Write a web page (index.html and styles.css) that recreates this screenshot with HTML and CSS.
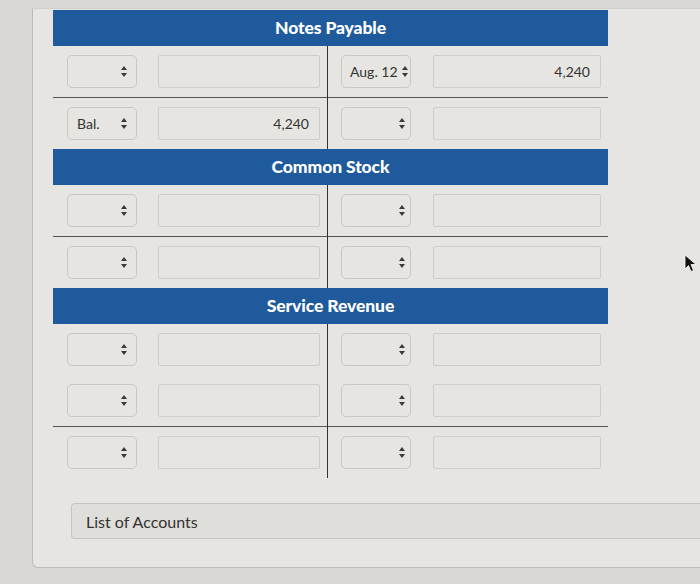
FILE: index.html
```html
<!DOCTYPE html>
<html lang="en">
<head>
    <meta charset="UTF-8">
    <meta name="viewport" content="width=device-width, initial-scale=1.0">
    <title>T-Accounts</title>
    <link rel="stylesheet" href="styles.css">
</head>
<body>
    <div class="panel">
        <div class="sheet">
            <!-- Notes Payable -->
            <div class="account">
                <div class="account-head">Notes Payable</div>
                <div class="t-body">
                    <div class="side debit">
                        <div class="row">
                            <div class="pick"><span></span><i class="arrows"></i></div>
                            <div class="amount"></div>
                        </div>
                        <div class="row ruled">
                            <div class="pick"><span>Bal.</span><i class="arrows"></i></div>
                            <div class="amount">4,240</div>
                        </div>
                    </div>
                    <div class="side credit">
                        <div class="row">
                            <div class="pick"><span>Aug. 12</span><i class="arrows"></i></div>
                            <div class="amount">4,240</div>
                        </div>
                        <div class="row ruled">
                            <div class="pick"><span></span><i class="arrows"></i></div>
                            <div class="amount"></div>
                        </div>
                    </div>
                </div>
            </div>

            <!-- Common Stock -->
            <div class="account">
                <div class="account-head">Common Stock</div>
                <div class="t-body">
                    <div class="side debit">
                        <div class="row">
                            <div class="pick"><span></span><i class="arrows"></i></div>
                            <div class="amount"></div>
                        </div>
                        <div class="row ruled">
                            <div class="pick"><span></span><i class="arrows"></i></div>
                            <div class="amount"></div>
                        </div>
                    </div>
                    <div class="side credit">
                        <div class="row">
                            <div class="pick"><span></span><i class="arrows"></i></div>
                            <div class="amount"></div>
                        </div>
                        <div class="row ruled">
                            <div class="pick"><span></span><i class="arrows"></i></div>
                            <div class="amount"></div>
                        </div>
                    </div>
                </div>
            </div>

            <!-- Service Revenue -->
            <div class="account">
                <div class="account-head">Service Revenue</div>
                <div class="t-body">
                    <div class="side debit">
                        <div class="row">
                            <div class="pick"><span></span><i class="arrows"></i></div>
                            <div class="amount"></div>
                        </div>
                        <div class="row">
                            <div class="pick"><span></span><i class="arrows"></i></div>
                            <div class="amount"></div>
                        </div>
                        <div class="row ruled">
                            <div class="pick"><span></span><i class="arrows"></i></div>
                            <div class="amount"></div>
                        </div>
                    </div>
                    <div class="side credit">
                        <div class="row">
                            <div class="pick"><span></span><i class="arrows"></i></div>
                            <div class="amount"></div>
                        </div>
                        <div class="row">
                            <div class="pick"><span></span><i class="arrows"></i></div>
                            <div class="amount"></div>
                        </div>
                        <div class="row ruled">
                            <div class="pick"><span></span><i class="arrows"></i></div>
                            <div class="amount"></div>
                        </div>
                    </div>
                </div>
            </div>
        </div>

        <div class="list-box">List of Accounts</div>
    </div>

    <svg class="cursor" width="14" height="20" viewBox="0 0 14 20">
        <path d="M1 1 L1 15 L4.5 11.5 L7 17.5 L9.5 16.5 L7 10.5 L12 10.5 Z" fill="#111" stroke="#fff" stroke-width="0.8"/>
    </svg>
</body>
</html>
```

FILE: styles.css
```css
body {
    margin: 0;
    height: 584px;
    overflow: hidden;
    background: #d9d7d4;
    font-family: Lato, "Open Sans", sans-serif;
    position: relative;
}
.panel {
    margin-left: 32px;
    height: 560px;
    padding: 9px 0 0 20px;
    background: #e7e5e2;
    border-left: 1px solid #bdbbb7;
    border-bottom: 1px solid #bdbbb7;
    border-top: 1px solid #d2d0cc;
    border-bottom-left-radius: 6px;
    box-sizing: border-box;
    margin-top: 8px;
}
.sheet {
    width: 555px;
    margin-top: -8px;
}
.account-head {
    height: 36px;
    line-height: 36px;
    background: #1e5a9c;
    color: #fff;
    font-weight: 900;
    font-size: 17.5px;
    text-align: center;
    letter-spacing: -0.1px;
}
.t-body {
    display: grid;
    grid-template-columns: 275px 280px;
}
.side.debit {
    border-right: 1px solid #333;
}
.row {
    display: flex;
    align-items: center;
    height: 51px;
    box-sizing: border-box;
}
.row.ruled {
    border-top: 1.5px solid #555;
    height: 52px;
}
.debit .row {
    padding: 0 7px 0 14px;
    gap: 21px;
}
.credit .row {
    padding: 0 7px 0 13px;
    gap: 22px;
}
.pick {
    width: 70px;
    height: 33px;
    flex: none;
    box-sizing: border-box;
    border: 1px solid #c9c7c3;
    border-radius: 5px;
    display: flex;
    align-items: center;
    justify-content: space-between;
    gap: 4px;
    padding: 0 8px 0 9px;
    font-size: 14px;
    color: #333;
    white-space: nowrap;
}
.credit .pick {
    padding: 0 4px 0 8px;
}
.arrows {
    position: relative;
    width: 7px;
    height: 11px;
    flex: none;
}
.arrows::before,
.arrows::after {
    content: "";
    position: absolute;
    left: 0;
    border-left: 3.5px solid transparent;
    border-right: 3.5px solid transparent;
}
.arrows::before {
    top: 0;
    border-bottom: 4.5px solid #3a3a3a;
}
.arrows::after {
    bottom: 0;
    border-top: 4.5px solid #3a3a3a;
}
.amount {
    flex: 1;
    height: 33px;
    box-sizing: border-box;
    border: 1px solid #cfcdc9;
    border-radius: 2px;
    line-height: 31px;
    text-align: right;
    padding-right: 10px;
    font-size: 14px;
    color: #333;
}
.list-box {
    margin: 25px 0 0 18px;
    height: 36px;
    line-height: 36px;
    padding-left: 14px;
    box-sizing: border-box;
    border: 1px solid #c6c4c0;
    border-right: none;
    border-radius: 4px 0 0 4px;
    background: #e0deda;
    font-size: 16px;
    color: #333;
}
.cursor {
    position: absolute;
    left: 684px;
    top: 254px;
}
```
